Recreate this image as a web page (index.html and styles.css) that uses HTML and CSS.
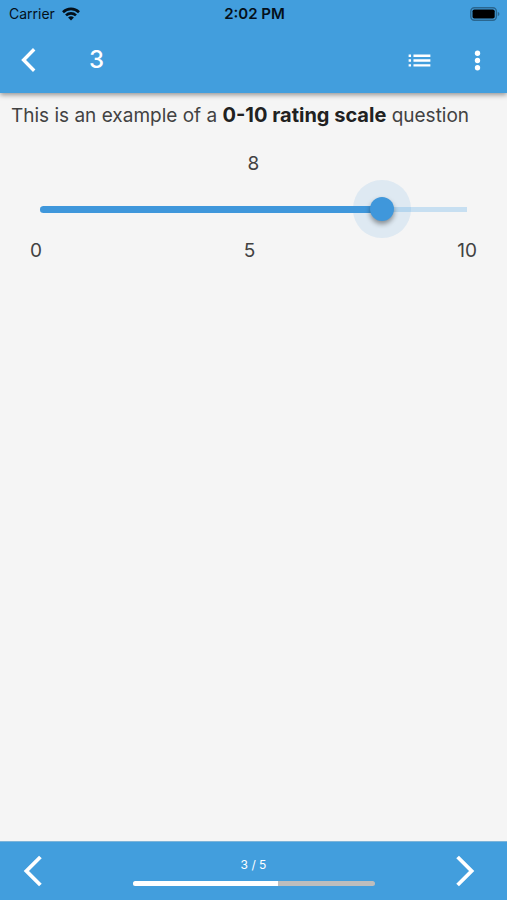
FILE: index.html
```html
<!DOCTYPE html>
<html lang="en">
<head>
  <meta charset="utf-8">
  <meta name="viewport" content="width=device-width, initial-scale=1">
  <title>Survey</title>
  <link rel="stylesheet" href="styles.css">
</head>
<body>
  <header class="top">
    <div class="status">
      <div class="status-left">
        <span>Carrier</span>
        <svg width="18" height="14" viewBox="0 0 18 14" aria-hidden="true">
          <g fill="none" stroke="#04101a" stroke-width="2.6">
            <path d="M1 5.2a11.4 11.4 0 0 1 16 0"/>
            <path d="M4 8.4a7.1 7.1 0 0 1 10 0"/>
          </g>
          <path d="M9 13.6L6.1 10.6a4.1 4.1 0 0 1 5.8 0z" fill="#04101a"/>
        </svg>
      </div>
      <span class="clock">2:02 PM</span>
      <svg class="battery" width="30" height="14" viewBox="0 0 30 14" aria-hidden="true">
        <rect x="0.8" y="0.8" width="25.6" height="12.4" rx="3.6" fill="none" stroke="#2a668f" stroke-width="1.4"/>
        <rect x="2.5" y="2.5" width="22.2" height="9" rx="1.8" fill="#000"/>
        <path d="M27.8 5v4c1.1-.4 1.6-1.2 1.6-2s-.5-1.6-1.6-2z" fill="#2a668f"/>
      </svg>
    </div>
    <div class="appbar">
      <button class="icon-button" type="button" aria-label="Back">
        <svg width="16" height="24" viewBox="0 0 16 24"><path d="M13.2 1.2L2.6 12l10.6 10.8" fill="none" stroke="#fff" stroke-width="3.4"/></svg>
      </button>
      <h1 class="title">3</h1>
      <button class="icon-button" type="button" aria-label="Question list">
        <svg width="29" height="29" viewBox="0 0 24 24" fill="#fff"><path d="M3 13h2v-2H3v2zm0 4h2v-2H3v2zm0-8h2V7H3v2zm4 4h14v-2H7v2zm0 4h14v-2H7v2zM7 7v2h14V7H7z"/></svg>
      </button>
      <button class="icon-button" type="button" aria-label="More">
        <svg width="29" height="29" viewBox="0 0 24 24" fill="#fff"><circle cx="12" cy="6" r="2.2"/><circle cx="12" cy="12" r="2.2"/><circle cx="12" cy="18" r="2.2"/></svg>
      </button>
    </div>
  </header>

  <main class="question">
    <label class="prompt" for="rating">This is an example of a <strong>0-10 rating scale</strong> question</label>
    <output class="value" for="rating">8</output>
    <div class="slider">
      <div class="track"><div class="track-fill" style="width: 80%"></div></div>
      <input class="range" id="rating" type="range" min="0" max="10" value="8">
    </div>
    <div class="scale"><span>0</span><span>5</span><span>10</span></div>
  </main>

  <footer class="bottom">
    <button class="icon-button" type="button" aria-label="Previous question">
      <svg width="20" height="32" viewBox="0 0 20 32"><path d="M17.4 2L3.4 16l14 14" fill="none" stroke="#fff" stroke-width="3.8"/></svg>
    </button>
    <div class="progress">
      <label class="progress-label" for="progress">3 / 5</label>
      <progress class="progress-bar" id="progress" max="5" value="3"></progress>
    </div>
    <button class="icon-button next" type="button" aria-label="Next question">
      <svg width="20" height="32" viewBox="0 0 20 32"><path d="M1.6 2l14 14-14 14" fill="none" stroke="#fff" stroke-width="3.8"/></svg>
    </button>
  </footer>
</body>
</html>
```
FILE: styles.css
```css
:root {
  --blue: #429edd;
  --accent: #3f97db;
  --text: #424242;
}

* {
  box-sizing: border-box;
}

body {
  margin: 0;
  min-height: 100vh;
  display: flex;
  flex-direction: column;
  background: #f5f5f5;
  color: var(--text);
  font-family: Inter, "Liberation Sans", sans-serif;
  font-size: 19px;
  line-height: 24px;
}

.top {
  background: var(--blue);
  box-shadow: 0 2px 5px rgba(0, 0, 0, 0.4);
}

.status {
  display: grid;
  grid-template-columns: 1fr auto 1fr;
  align-items: center;
  height: 27px;
  padding: 0 7px 0 9px;
  color: #04101a;
  font-size: 14px;
}

.status-left {
  display: flex;
  align-items: center;
  gap: 7px;
}

.clock {
  font-size: 15px;
  font-weight: 600;
}

.battery {
  justify-self: end;
}

.appbar {
  display: flex;
  align-items: center;
  height: 66px;
  padding-right: 1px;
}

.icon-button {
  display: flex;
  align-items: center;
  justify-content: center;
  width: 58px;
  height: 58px;
  padding: 0;
  border: 0;
  background: none;
}

.title {
  flex: 1;
  margin: 0;
  padding-left: 31px;
  color: #fff;
  font-size: 24px;
  font-weight: 500;
}

.question {
  flex: 1;
  display: flex;
  flex-direction: column;
  padding: 10px 11px;
}

.prompt strong {
  color: #212121;
  font-size: 20px;
  font-weight: 700;
}

.value {
  margin-top: 24px;
  text-align: center;
}

.slider {
  display: grid;
  align-items: center;
  height: 66px;
  padding: 0 17px;
}

.track,
.range {
  grid-area: 1 / 1;
}

.track {
  display: flex;
  align-items: center;
  height: 7px;
  margin: 0 12px;
  background: linear-gradient(#c7dff1, #c7dff1) center / 100% 5px no-repeat;
}

.track-fill {
  height: 7px;
  border-radius: 4px;
  background: var(--accent);
}

.range {
  appearance: none;
  width: 100%;
  height: 24px;
  margin: 0;
  background: none;
}

.range::-webkit-slider-thumb {
  appearance: none;
  width: 24px;
  height: 24px;
  border: 0;
  border-radius: 50%;
  background: var(--accent);
  box-shadow: 0 3px 5px rgba(0, 0, 0, 0.4), 0 0 0 17px rgba(66, 158, 221, 0.13);
}

.scale {
  display: flex;
  justify-content: space-between;
  margin-top: -3px;
  padding: 0 19px;
}

.bottom {
  display: grid;
  grid-template-columns: 1fr minmax(0, 242px) 1fr;
  align-items: center;
  height: 59px;
  padding: 0 4px;
  border-top: 1px solid #7db4d9;
  background: var(--blue);
}

.next {
  justify-self: end;
  margin-right: 8px;
}

.progress {
  display: flex;
  flex-direction: column;
  align-items: center;
  gap: 8px;
}

.progress-label {
  color: #fff;
  font-size: 12px;
  line-height: 16px;
}

.progress-bar {
  appearance: none;
  display: block;
  width: 100%;
  height: 5px;
  border: 0;
  border-radius: 3px;
  overflow: hidden;
}

.progress-bar::-webkit-progress-bar {
  background: #bdbdbd;
}

.progress-bar::-webkit-progress-value {
  background: #fff;
}
```
